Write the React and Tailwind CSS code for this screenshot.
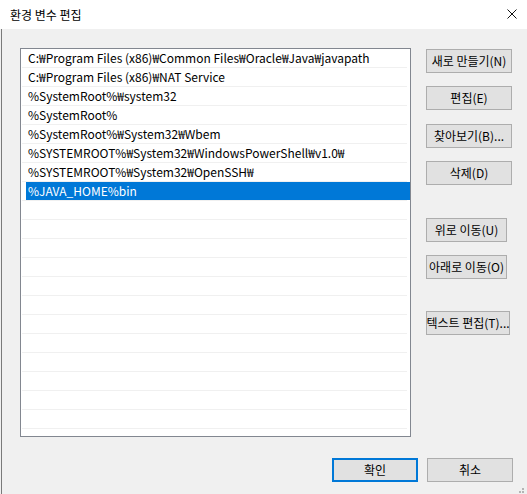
const paths = [
  'C:₩Program Files (x86)₩Common Files₩Oracle₩Java₩javapath',
  'C:₩Program Files (x86)₩NAT Service',
  '%SystemRoot%₩system32',
  '%SystemRoot%',
  '%SystemRoot%₩System32₩Wbem',
  '%SYSTEMROOT%₩System32₩WindowsPowerShell₩v1.0₩',
  '%SYSTEMROOT%₩System32₩OpenSSH₩',
  '%JAVA_HOME%bin',
]

const selected = 7
const totalRows = 20

function Btn({ label, className = '' }) {
  return (
    <div
      className={`h-[24px] flex items-center justify-center bg-[#e1e1e1] border border-[#adadad] text-[12px] text-black whitespace-nowrap ${className}`}
    >
      {label}
    </div>
  )
}

export default function App() {
  const rows = Array.from({ length: totalRows }, (_, i) => paths[i] ?? '')

  return (
    <div
      className="w-[527px] h-[494px] bg-[#f0f0f0] flex flex-col overflow-hidden"
      style={{ fontFamily: "'Noto Sans CJK KR', 'Noto Sans', sans-serif" }}
    >
      <div className="h-[29px] bg-white flex items-center justify-between pl-[10px] pr-[10px] shrink-0">
        <span className="text-[12px] text-black">환경 변수 편집</span>
        <svg width="10" height="10" viewBox="0 0 10 10" className="mt-[-1px]">
          <path d="M0.5 0.5 L9.5 9.5 M9.5 0.5 L0.5 9.5" stroke="#111" strokeWidth="1" fill="none" />
        </svg>
      </div>

      <div className="flex-1 flex flex-col relative">
        <div className="absolute left-[1px] top-0 bottom-0 w-px bg-[#7a7a7a]" />

        <div className="flex pt-[19px] pl-[20px]">
          <div className="w-[391px] h-[389px] bg-white border border-[#828790] flex flex-col">
            {rows.map((text, i) => (
              <div key={i} className="flex flex-col">
                {i === selected ? (
                  <div className="h-[18px] ml-[5px] pl-[2px] bg-[#0078d7] text-white text-[12px] leading-[18px] whitespace-nowrap">
                    {text}
                  </div>
                ) : (
                  <div className="h-[18px] pl-[7px] text-black text-[12px] leading-[18px] whitespace-nowrap overflow-hidden">
                    {text}
                  </div>
                )}
                <div className="h-px ml-[1px] mr-[3px] bg-[#f0f0f0]" />
              </div>
            ))}
          </div>

          <div className="ml-[15px] flex flex-col pt-[1px]">
            <Btn label="새로 만들기(N)" className="w-[86px]" />
            <Btn label="편집(E)" className="w-[86px] mt-[13px]" />
            <Btn label="찾아보기(B)..." className="w-[86px] mt-[14px]" />
            <Btn label="삭제(D)" className="w-[86px] mt-[13px]" />
            <Btn label="위로 이동(U)" className="w-[81px] mt-[33px]" />
            <Btn label="아래로 이동(O)" className="w-[81px] mt-[13px]" />
            <Btn label="텍스트 편집(T)..." className="w-[84px] mt-[32px]" />
          </div>
        </div>

        <div className="flex justify-end gap-[9px] pr-[14px] mt-[21px]">
          <div className="w-[86px] h-[24px] flex items-center justify-center bg-[#e1e1e1] border-2 border-[#0078d7] text-[12px] text-black">
            확인
          </div>
          <Btn label="취소" className="w-[86px]" />
        </div>

        <div className="absolute right-[3px] bottom-[1px] grid grid-cols-2 gap-px">
          <div className="w-[2px] h-[2px]" />
          <div className="w-[2px] h-[2px] bg-[#b4b4b4]" />
          <div className="w-[2px] h-[2px] bg-[#b4b4b4]" />
          <div className="w-[2px] h-[2px] bg-[#b4b4b4]" />
        </div>
      </div>
    </div>
  )
}
